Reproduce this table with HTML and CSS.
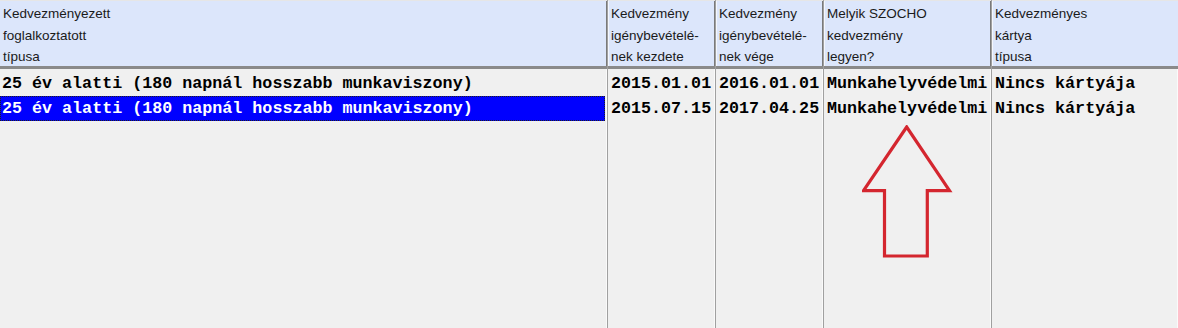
FILE: index.html
```html
<!DOCTYPE html>
<html lang="hu">
<head>
<meta charset="utf-8">
<title>Kedvezmények</title>
<link rel="stylesheet" href="styles.css">
</head>
<body>
<div class="grid">
  <div class="col c1">
    <div class="hd">Kedvezményezett<br>foglalkoztatott<br>típusa</div>
    <div class="bd">
      <div class="row">25 év alatti (180 napnál hosszabb munkaviszony)</div>
      <div class="row sel">25 év alatti (180 napnál hosszabb munkaviszony)</div>
    </div>
  </div>
  <div class="col c2">
    <div class="hd">Kedvezmény<br>igénybevételé-<br>nek kezdete</div>
    <div class="bd">
      <div class="row">2015.01.01</div>
      <div class="row">2015.07.15</div>
    </div>
  </div>
  <div class="col c3">
    <div class="hd">Kedvezmény<br>igénybevételé-<br>nek vége</div>
    <div class="bd">
      <div class="row">2016.01.01</div>
      <div class="row">2017.04.25</div>
    </div>
  </div>
  <div class="col c4">
    <div class="hd">Melyik SZOCHO<br>kedvezmény<br>legyen?</div>
    <div class="bd">
      <div class="row">Munkahelyvédelmi</div>
      <div class="row">Munkahelyvédelmi</div>
    </div>
  </div>
  <div class="col c5">
    <div class="hd">Kedvezményes<br>kártya<br>típusa</div>
    <div class="bd">
      <div class="row">Nincs kártyája</div>
      <div class="row">Nincs kártyája</div>
    </div>
  </div>
</div>
<svg class="arrow" width="92" height="136" viewBox="0 0 92 136">
  <polygon points="44.7,2 1.5,65.7 22.5,65.7 22.5,131 65.3,131 65.3,65.7 87.5,65.7" fill="none" stroke="#d4262f" stroke-width="3.2"/>
</svg>
</body>
</html>
```

FILE: styles.css
```css
html, body {
  margin: 0;
  padding: 0;
  background: #f0f0f0;
}
body {
  width: 1178px;
  height: 328px;
  overflow: hidden;
  position: relative;
}
.grid {
  display: flex;
  height: 328px;
}
.col {
  display: flex;
  flex-direction: column;
  border-right: 1px solid #a0a0a0;
  box-sizing: border-box;
}
.c1 { width: 608px; }
.c2 { width: 108px; }
.c3 { width: 108px; }
.c4 { width: 168px; }
.c5 { flex: 1; border-right: none; }
.hd {
  height: 69px;
  box-sizing: border-box;
  background: #dce6fb;
  border-top: 1px solid #e6e6e6;
  border-bottom: 3px solid #8a8a8a;
  box-shadow: inset -1px 0 #7a7a7a, inset 1px 0 #f4f7fd;
  padding: 2px 0 0 3px;
  font-family: "Liberation Sans", Arial, sans-serif;
  font-size: 13.5px;
  line-height: 21.5px;
  color: #1a1a1a;
}
.c1 .hd { box-shadow: inset -1px 0 #7a7a7a; }
.c5 .hd { box-shadow: inset 1px 0 #f4f7fd; }
.bd {
  flex: 1;
  padding-top: 2px;
  box-shadow: inset -1px 0 #fafafa;
}
.row {
  height: 25px;
  box-sizing: border-box;
  padding: 0 0 0 3px;
  font-family: "Liberation Mono", "Courier New", monospace;
  font-weight: bold;
  font-size: 16.7px;
  line-height: 25px;
  color: #000;
  white-space: nowrap;
}
.c1 .row { padding-left: 2px; }
.row.sel {
  background: #0000ff;
  color: #fff;
  border: 1px dotted #202020;
  margin-right: 2px;
  padding-left: 1px;
  line-height: 23px;
}
.arrow {
  position: absolute;
  left: 862px;
  top: 125px;
}
```
